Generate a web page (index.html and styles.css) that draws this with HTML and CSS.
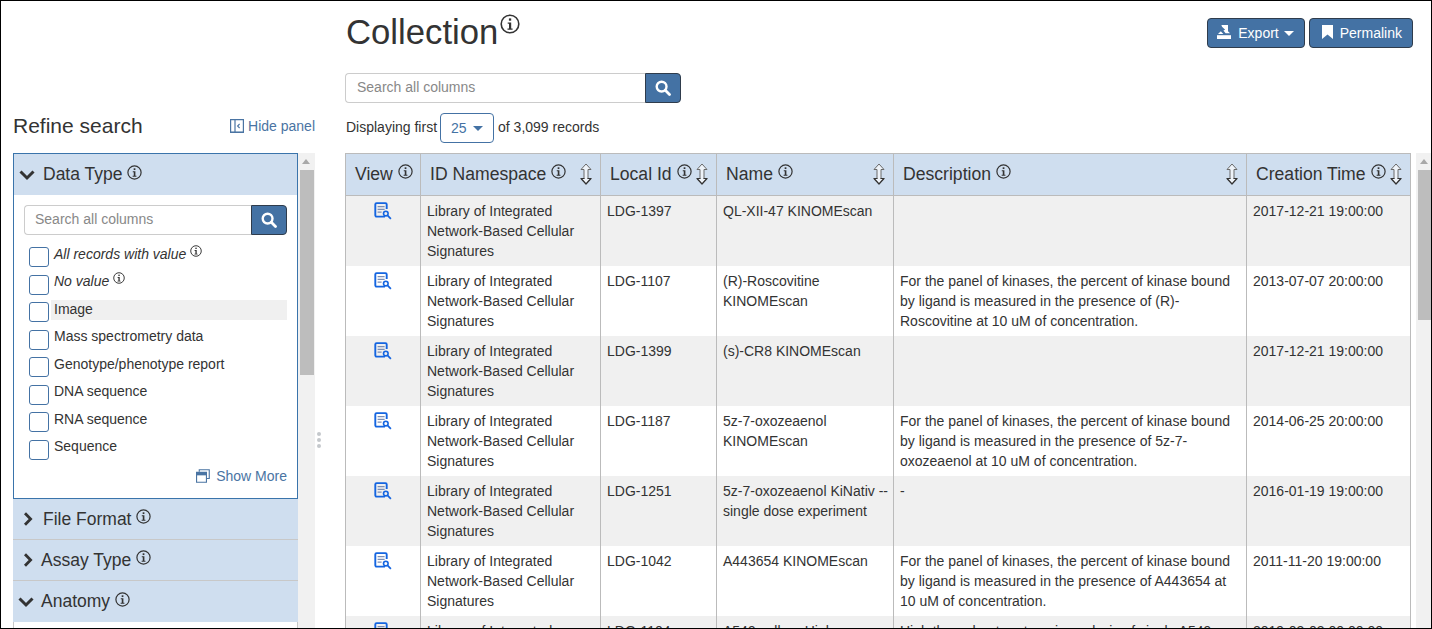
FILE: index.html
```html
<!DOCTYPE html>
<html lang="en">
<head>
<meta charset="utf-8">
<title>Collection</title>
<link rel="stylesheet" href="styles.css">
</head>
<body>
<svg class="defs" width="0" height="0" aria-hidden="true">
  <symbol id="info" viewBox="0 0 20 20">
    <circle cx="10" cy="10" r="8.8" fill="none" stroke="currentColor" stroke-width="1.6"/>
    <rect x="8.9" y="4.4" width="2.3" height="2.3" fill="currentColor"/>
    <path d="M7.7 8.4h3.5v6h1.4v1.4H7.5v-1.4h1.5V9.8H7.7z" fill="currentColor"/>
  </symbol>
  <symbol id="search" viewBox="0 0 16 16">
    <circle cx="6.6" cy="6.6" r="4.9" fill="none" stroke="currentColor" stroke-width="2.4"/>
    <path d="M10.3 10.3l4.2 4.2" stroke="currentColor" stroke-width="2.8" stroke-linecap="round"/>
  </symbol>
  <symbol id="sort" viewBox="0 0 12 22">
    <path d="M6 1L11 6.5H8V15.5H11L6 21L1 15.5H4V6.5H1z" fill="#eef3f9" stroke="#6a6a6a" stroke-width="1" stroke-linejoin="round"/>
    <path d="M4 15V15.5H1L6 21L11 15.5H8V15" fill="none" stroke="#333" stroke-width="1.2" stroke-linejoin="round"/>
  </symbol>
  <symbol id="view" viewBox="0 0 18 18">
    <path d="M11 14.6H2.6A1.3 1.3 0 0 1 1.3 13.3V2.4A1.3 1.3 0 0 1 2.6 1.1H11.4A1.3 1.3 0 0 1 12.7 2.4V7" fill="none" stroke="currentColor" stroke-width="1.9"/>
    <path d="M3.6 4.6h7M3.6 7.4h7M3.6 10.2h4" stroke="#7d8fb5" stroke-width="1.2"/>
    <circle cx="11.8" cy="11.6" r="2.3" fill="none" stroke="currentColor" stroke-width="1.6"/>
    <path d="M13.5 13.3l3.4 3.6" stroke="currentColor" stroke-width="1.7"/>
  </symbol>
  <symbol id="chev-down" viewBox="0 0 16 12">
    <path d="M1.5 2.5l6.5 6.5 6.5-6.5" fill="none" stroke="currentColor" stroke-width="3"/>
  </symbol>
  <symbol id="chev-right" viewBox="0 0 10 14">
    <path d="M2 1.2l5.6 5.8L2 12.8" fill="none" stroke="currentColor" stroke-width="2.8"/>
  </symbol>
</svg>

<div class="frame">
  <aside class="side">
    <div class="side-head">
      <h2 class="refine">Refine search</h2>
      <a class="link hide-link">
        <svg class="hide-icon" viewBox="0 0 14 14"><path d="M.6.6h12.8v12.8H.6zM5 .6v12.8" fill="none" stroke="currentColor" stroke-width="1.2"/><path d="M9.6 5L7.6 7l2 2" fill="none" stroke="currentColor" stroke-width="1.1"/><path d="M0 12.6h14V14H0z" fill="currentColor"/></svg>
        Hide panel
      </a>
    </div>
    <div class="side-body">
      <div class="facets">
        <section class="facet-open">
          <div class="facet-head">
            <svg class="chev-d"><use href="#chev-down"/></svg>
            <span class="facet-title">Data Type</span>
            <svg class="ico-facet"><use href="#info"/></svg>
          </div>
          <div class="facet-body">
            <div class="search-group">
              <input class="search-input" type="text" placeholder="Search all columns">
              <button class="search-btn" type="button"><svg class="ico-search"><use href="#search"/></svg></button>
            </div>
            <ul class="options">
              <li class="option"><span class="check"></span><span class="opt-label opt-em">All records with value<svg class="ico-opt"><use href="#info"/></svg></span></li>
              <li class="option"><span class="check"></span><span class="opt-label opt-em">No value<svg class="ico-opt"><use href="#info"/></svg></span></li>
              <li class="option"><span class="check"></span><span class="opt-label opt-hover">Image</span></li>
              <li class="option"><span class="check"></span><span class="opt-label">Mass spectrometry data</span></li>
              <li class="option"><span class="check"></span><span class="opt-label">Genotype/phenotype report</span></li>
              <li class="option"><span class="check"></span><span class="opt-label">DNA sequence</span></li>
              <li class="option"><span class="check"></span><span class="opt-label">RNA sequence</span></li>
              <li class="option"><span class="check"></span><span class="opt-label">Sequence</span></li>
            </ul>
            <div class="show-more">
              <a class="link more-link">
                <svg class="more-icon" viewBox="0 0 15 15"><path d="M3.5 3V.8h10.7v9.4H11.6" fill="none" stroke="currentColor" stroke-width="1.2"/><path d="M.6 3.6h10.6v10.6H.6z" fill="#fff" stroke="currentColor" stroke-width="1.2"/><path d="M.6 3.6h10.6v3.2H.6z" fill="currentColor"/></svg>
                Show More
              </a>
            </div>
          </div>
        </section>
        <div class="facet-closed">
          <svg class="chev-r"><use href="#chev-right"/></svg>
          <span class="facet-title">File Format</span>
          <svg class="ico-facet"><use href="#info"/></svg>
        </div>
        <div class="facet-closed">
          <svg class="chev-r chev-tight"><use href="#chev-right"/></svg>
          <span class="facet-title">Assay Type</span>
          <svg class="ico-facet"><use href="#info"/></svg>
        </div>
        <div class="facet-closed facet-anatomy">
          <svg class="chev-d chev-tight"><use href="#chev-down"/></svg>
          <span class="facet-title">Anatomy</span>
          <svg class="ico-facet"><use href="#info"/></svg>
        </div>
        <div class="facet-rest"></div>
      </div>
      <div class="track track-side"><span class="arrow"></span><div class="thumb thumb-side"></div></div>
    </div>
  </aside>

  <div class="divider"><span class="dots"><i></i><i></i><i></i></span></div>

  <main class="main">
    <div class="title-row">
      <h1 class="title">Collection<svg class="ico-title"><use href="#info"/></svg></h1>
      <div class="actions">
        <button class="btn btn-export" type="button">
          <svg class="ico-export" viewBox="0 0 14 14"><path d="M0 10.2h14V14H0z" fill="currentColor"/><path d="M4.4 0h6.6v6.2l2 2H8.6L6.4 5.4l1.8-.6L5 1.8z" fill="currentColor"/><path d="M1 9l2.8-2.8L6.4 9z" fill="currentColor"/></svg>
          Export <span class="caret caret-white"></span>
        </button>
        <button class="btn btn-link" type="button">
          <svg class="ico-mark" viewBox="0 0 11 14"><path d="M0 0h11v14L5.5 9.6 0 14z" fill="currentColor"/></svg>
          Permalink
        </button>
      </div>
    </div>
    <div class="search-group search-main">
      <input class="search-input" type="text" placeholder="Search all columns">
      <button class="search-btn" type="button"><svg class="ico-search"><use href="#search"/></svg></button>
    </div>
    <div class="display-row">
      <span class="display-text">Displaying first</span>
      <span class="page-size">25 <span class="caret"></span></span>
      <span class="display-text">of 3,099 records</span>
    </div>
    <div class="table-row">
      <table class="records">
        <colgroup>
          <col class="c-view"><col class="c-ns"><col class="c-id"><col class="c-name"><col class="c-desc"><col class="c-time">
        </colgroup>
        <thead>
          <tr>
            <th><div class="th-in"><span class="th-label">View<svg class="ico-th"><use href="#info"/></svg></span></div></th>
            <th><div class="th-in"><span class="th-label">ID Namespace<svg class="ico-th"><use href="#info"/></svg></span><svg class="ico-sort"><use href="#sort"/></svg></div></th>
            <th><div class="th-in"><span class="th-label">Local Id<svg class="ico-th"><use href="#info"/></svg></span><svg class="ico-sort"><use href="#sort"/></svg></div></th>
            <th><div class="th-in"><span class="th-label">Name<svg class="ico-th"><use href="#info"/></svg></span><svg class="ico-sort"><use href="#sort"/></svg></div></th>
            <th><div class="th-in"><span class="th-label">Description<svg class="ico-th"><use href="#info"/></svg></span><svg class="ico-sort"><use href="#sort"/></svg></div></th>
            <th><div class="th-in"><span class="th-label">Creation Time<svg class="ico-th"><use href="#info"/></svg></span><svg class="ico-sort"><use href="#sort"/></svg></div></th>
          </tr>
        </thead>
        <tbody>
          <tr>
            <td class="td-view"><svg class="ico-view"><use href="#view"/></svg></td>
            <td>Library of Integrated Network-Based Cellular Signatures</td>
            <td>LDG-1397</td>
            <td>QL-XII-47 KINOMEscan</td>
            <td></td>
            <td>2017-12-21 19:00:00</td>
          </tr>
          <tr>
            <td class="td-view"><svg class="ico-view"><use href="#view"/></svg></td>
            <td>Library of Integrated Network-Based Cellular Signatures</td>
            <td>LDG-1107</td>
            <td>(R)-Roscovitine KINOMEscan</td>
            <td>For the panel of kinases, the percent of kinase bound by ligand is measured in the presence of (R)-Roscovitine at 10 uM of concentration.</td>
            <td>2013-07-07 20:00:00</td>
          </tr>
          <tr>
            <td class="td-view"><svg class="ico-view"><use href="#view"/></svg></td>
            <td>Library of Integrated Network-Based Cellular Signatures</td>
            <td>LDG-1399</td>
            <td>(s)-CR8 KINOMEscan</td>
            <td></td>
            <td>2017-12-21 19:00:00</td>
          </tr>
          <tr>
            <td class="td-view"><svg class="ico-view"><use href="#view"/></svg></td>
            <td>Library of Integrated Network-Based Cellular Signatures</td>
            <td>LDG-1187</td>
            <td>5z-7-oxozeaenol KINOMEscan</td>
            <td>For the panel of kinases, the percent of kinase bound by ligand is measured in the presence of 5z-7-oxozeaenol at 10 uM of concentration.</td>
            <td>2014-06-25 20:00:00</td>
          </tr>
          <tr>
            <td class="td-view"><svg class="ico-view"><use href="#view"/></svg></td>
            <td>Library of Integrated Network-Based Cellular Signatures</td>
            <td>LDG-1251</td>
            <td>5z-7-oxozeaenol KiNativ -- single dose experiment</td>
            <td>-</td>
            <td>2016-01-19 19:00:00</td>
          </tr>
          <tr>
            <td class="td-view"><svg class="ico-view"><use href="#view"/></svg></td>
            <td>Library of Integrated Network-Based Cellular Signatures</td>
            <td>LDG-1042</td>
            <td>A443654 KINOMEscan</td>
            <td>For the panel of kinases, the percent of kinase bound by ligand is measured in the presence of A443654 at 10 uM of concentration.</td>
            <td>2011-11-20 19:00:00</td>
          </tr>
          <tr>
            <td class="td-view"><svg class="ico-view"><use href="#view"/></svg></td>
            <td>Library of Integrated Network-Based Cellular Signatures</td>
            <td>LDG-1104</td>
            <td>A549 cells -- High</td>
            <td>High throughput proteomic analysis of single A549</td>
            <td>2019-03-03 00:00:00</td>
          </tr>
        </tbody>
      </table>
      <div class="track track-main"><span class="arrow"></span><div class="thumb thumb-main"></div></div>
    </div>
  </main>
</div>
</body>
</html>
```
FILE: styles.css
```css
* { box-sizing: border-box; }
html, body { margin: 0; padding: 0; height: 100%; overflow: hidden; }
body {
  font-family: "Liberation Sans", Arial, sans-serif;
  font-size: 14px;
  line-height: 20px;
  color: #333;
  background: #fff;
}
.defs { position: absolute; }
svg { display: inline-block; }

.frame {
  display: flex;
  width: 1432px;
  height: 629px;
  border: 1px solid #000;
  overflow: hidden;
}
.link { color: #4a74a3; }

/* Side panel */
.side { flex: none; width: 316px; padding: 112px 0 0 12px; }
.side-head {
  display: flex;
  justify-content: space-between;
  align-items: flex-start;
  height: 27px;
  margin: 0 2px 13px 0;
}
.refine { margin: 0; font-size: 21px; font-weight: 400; line-height: 26px; }
.hide-link { display: flex; align-items: center; gap: 4px; height: 26px; padding-bottom: 1px; }
.hide-icon { width: 14px; height: 14px; margin-top: 1px; }
.side-body { display: flex; height: 520px; }
.facets { flex: none; width: 285px; }
.facet-open { border: 1px solid #3a74ab; }
.facet-head {
  display: flex;
  align-items: center;
  height: 41px;
  padding-left: 5px;
  background: #cfdeef;
}
.facet-title { font-size: 17.5px; line-height: 24px; padding-bottom: 2px; white-space: nowrap; }
.facet-closed .facet-title { padding-bottom: 1px; }
.chev-d { width: 16px; height: 12px; margin-right: 8px; color: #333; }
.chev-r { width: 10px; height: 14px; margin: 0 10px 0 10px; color: #333; }
.chev-r.chev-tight { margin-right: 8px; }
.chev-d.chev-tight { margin: 0 7px 0 5px; }
.ico-facet { width: 15px; height: 15px; margin: -5px 0 0 5px; color: #333; }
.facet-body { padding: 10px 10px 12px; }
.search-group { display: flex; height: 30px; }
.search-main { width: 336px; }
.search-input {
  flex: 1;
  min-width: 0;
  height: 30px;
  padding: 0 10px 2px;
  border: 1px solid #ccc;
  border-right: 0;
  border-radius: 4px 0 0 4px;
  font: inherit;
  color: #333;
  background: #fff;
}
.search-main .search-input { padding-left: 11px; }
.search-input::placeholder { color: #888; opacity: 1; }
.search-btn {
  flex: none;
  display: flex;
  align-items: center;
  justify-content: center;
  width: 36px;
  height: 30px;
  padding: 0;
  border: 1px solid #2f3c4c;
  border-radius: 0 4px 4px 0;
  background: #4472a4;
  color: #fff;
}
.ico-search { width: 16px; height: 16px; }
.options { margin: 12px 0 0; padding: 0 0 0 5px; list-style: none; }
.option { display: flex; gap: 5px; height: 27.5px; }
.check {
  flex: none;
  width: 20px;
  height: 20px;
  border: 1px solid #4472a4;
  border-radius: 3px;
  background: #fff;
}
.opt-label { flex: 1; height: 20px; margin-top: -2.5px; line-height: 18px; white-space: nowrap; }
.opt-em { font-style: italic; }
.opt-hover { margin-left: -3px; padding-left: 3px; background: #f0f0f0; }
.ico-opt { width: 12px; height: 12px; margin-left: 4px; vertical-align: 2px; color: #333; }
.show-more { display: flex; justify-content: flex-end; margin-top: -1px; height: 20px; }
.more-link { display: flex; align-items: center; gap: 6px; }
.more-icon { width: 14px; height: 14px; }
.facet-closed {
  display: flex;
  align-items: center;
  height: 41px;
  padding-left: 0;
  background: #cfdeef;
  border-bottom: 1px solid #c8c8c8;
}
.facet-anatomy { border-bottom: 0; }
.facet-rest {
  height: 40px;
  border-left: 1px solid #c8c8c8;
  border-right: 1px solid #c8c8c8;
}

/* Scrollbars */
.track { position: relative; flex: none; background: #f1f1f1; }
.track-side { width: 17px; }
.track-main { width: 15px; margin-left: 5px; height: 476px; }
.arrow {
  position: absolute;
  top: 6px;
  left: 4px;
  width: 0;
  height: 0;
  border-left: 4px solid transparent;
  border-right: 4px solid transparent;
  border-bottom: 5px solid #a8a8a8;
}
.thumb { background: #bdbdbd; }
.thumb-side { width: 14px; height: 205px; margin: 17px 0 0 2px; }
.thumb-main { width: 13px; height: 150px; margin: 17px 0 0 2px; float: left; }

/* Divider */
.divider { position: relative; flex: none; width: 28px; }
.dots {
  position: absolute;
  top: 431px;
  left: 0;
  display: flex;
  flex-direction: column;
  gap: 2px;
}
.dots i { width: 4px; height: 4px; border-radius: 50%; background: #c4c8cc; }

/* Main */
.main { flex: 1; min-width: 0; }
.title-row {
  display: flex;
  justify-content: space-between;
  align-items: flex-start;
  height: 72px;
  padding-right: 18px;
}
.title {
  margin: 11px 0 0 1px;
  font-size: 34.7px;
  font-weight: 400;
  line-height: 40px;
  white-space: nowrap;
}
.ico-title { width: 20px; height: 20px; margin-left: 2px; vertical-align: 10px; }
.actions { display: flex; gap: 4px; margin-top: 17px; }
.btn {
  display: flex;
  align-items: center;
  height: 30px;
  border: 1px solid #2f3c4c;
  border-radius: 4px;
  background: #4472a4;
  color: #fff;
  font: inherit;
  white-space: nowrap;
}
.btn-export { padding: 0 10px 0 9px; }
.btn-link { padding: 0 10px; }
.ico-export { width: 14px; height: 14px; margin: -3px 7px 0 0; }
.ico-mark { width: 11px; height: 14px; margin: -3px 7px 0 2px; }
.caret {
  display: inline-block;
  width: 0;
  height: 0;
  margin-left: 2px;
  vertical-align: 2px;
  border-left: 5px solid transparent;
  border-right: 5px solid transparent;
  border-top: 5px solid #4472a4;
}
.caret-white { border-top-color: #fff; margin-left: 5px; }
.display-row {
  display: flex;
  align-items: center;
  gap: 3px;
  height: 30px;
  margin: 10px 0;
  padding-left: 1px;
}
.display-text { padding-bottom: 2px; }
.page-size {
  width: 54px;
  height: 30px;
  margin-right: 1px;
  padding: 0 10px;
  line-height: 28px;
  border: 1px solid #4472a4;
  border-radius: 4px;
  color: #4472a4;
  white-space: nowrap;
}
.table-row { display: flex; align-items: flex-start; }
.records {
  flex: none;
  width: 1066px;
  table-layout: fixed;
  border-collapse: separate;
  border-spacing: 0;
}
.c-view { width: 76px; }
.c-ns { width: 180px; }
.c-id { width: 116px; }
.c-name { width: 177px; }
.c-desc { width: 353px; }
.c-time { width: 164px; }
.records th {
  height: 43px;
  padding: 0 9px;
  background: #cfdeef;
  border-top: 1px solid #bbb;
  border-bottom: 1px solid #bbb;
  border-right: 1px solid #bbb;
  font-size: 17.6px;
  font-weight: 400;
  text-align: left;
}
.records th:first-child, .records td:first-child { border-left: 1px solid #bbb; }
.th-in { display: flex; align-items: center; justify-content: space-between; padding-bottom: 2px; }
.th-label { display: flex; align-items: center; white-space: nowrap; }
.ico-th { flex: none; width: 15px; height: 15px; margin: -5px 0 0 5px; color: #333; }
.ico-sort { flex: none; width: 12px; height: 22px; margin-right: -1px; }
.records td {
  height: 70px;
  padding: 5px 6px;
  vertical-align: top;
  border-right: 1px solid #bbb;
}
.records td:nth-child(4) { padding-right: 2px; }
.records tbody tr:nth-child(odd) td { background: #f0f0f0; }
.td-view { text-align: center; }
.ico-view { width: 18px; height: 18px; margin-top: 1px; color: #1565e0; }
```
